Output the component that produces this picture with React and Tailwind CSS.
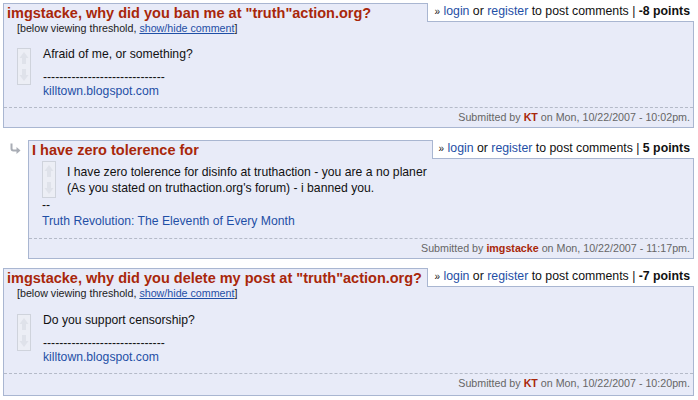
import React from 'react';

const RED = 'text-[#a8270a]';
const BLUE = 'text-[#1f4fa6]';

function VoteBox() {
  return (
    <div className="w-[14px] h-[37px] shrink-0 border border-[#cfd3dc] bg-[#eceef5]">
      <svg width="12" height="35" viewBox="0 0 12 35">
        <path d="M6 3 L1.5 9 L4 9 L4 15 L8 15 L8 9 L10.5 9 Z" fill="#dfe2ea" />
        <path d="M6 32 L1.5 26 L4 26 L4 20 L8 20 L8 26 L10.5 26 Z" fill="#dfe2ea" />
      </svg>
    </div>
  );
}

function ReplyArrow() {
  return (
    <svg width="12" height="12" viewBox="0 0 12 12">
      <path d="M2.5 0.5 L2.5 5.5 Q2.5 7.5 4.5 7.5 L8 7.5" fill="none" stroke="#a9adb5" strokeWidth="2" />
      <path d="M7.5 4 L11.5 7.5 L7.5 11 Z" fill="#a9adb5" />
    </svg>
  );
}

function Links({ points }) {
  return (
    <div className="absolute top-[-1px] right-[-1px] h-[19px] bg-white border-l border-b border-[#a9b6d1] pl-[6px] pr-[4px] text-[12.3px] leading-[16px] text-[#111] whitespace-nowrap">
      <span className="text-[10px]">»</span>{' '}
      <a className={BLUE}>login</a> or <a className={BLUE}>register</a> to post comments |{' '}
      <b>{points}</b>
    </div>
  );
}

function Footer({ author, date, bottom = 'pb-[3px]' }) {
  return (
    <div className={`mt-[9px] border-t border-dashed border-[#b4bac8] pt-[3px] pr-[3px] text-right text-[10.7px] leading-[13px] text-[#666] ${bottom}`}>
      Submitted by <b className={RED}>{author}</b> on {date}.
    </div>
  );
}

function Comment({ title, points, threshold, author, date, bottom, children }) {
  return (
    <div className="relative flex-1 border border-[#a9b6d1] bg-[#e8ebf8]">
      <Links points={points} />
      <div className={`pl-[3px] text-[14.5px] leading-[18px] font-bold ${RED}`}>{title}</div>
      {threshold && (
        <div className="pl-[13px] text-[10.7px] leading-[13px] text-[#222]">
          [below viewing threshold, <a className="text-[#1f4fa6] underline">show/hide comment</a>]
        </div>
      )}
      {children}
      <Footer author={author} date={date} bottom={bottom} />
    </div>
  );
}

export default function App() {
  return (
    <div className="w-[698px] h-[400px] bg-white pt-[3px] pl-[3px] pr-[4px] font-['Liberation_Sans',Arial,sans-serif] text-[#111]">
      <div className="flex">
        <Comment
          title={'imgstacke, why did you ban me at "truth"action.org?'}
          points="-8 points"
          threshold
          author="KT"
          date="Mon, 10/22/2007 - 10:02pm"
        >
          <div className="flex items-start mt-[12px] pl-[13px]">
            <div className="mt-px">
              <VoteBox />
            </div>
            <div className="ml-[12px] text-[12.2px] leading-[14px]">
              <p className="mb-[9px]">Afraid of me, or something?</p>
              <p>
                ------------------------------
                <br />
                <a className={BLUE}>killtown.blogspot.com</a>
              </p>
            </div>
          </div>
        </Comment>
      </div>

      <div className="flex mt-[12px]">
        <div className="w-[25px] shrink-0 pl-[6px] pt-[3px]">
          <ReplyArrow />
        </div>
        <Comment title="I have zero tolerence for" points="5 points" author="imgstacke" date="Mon, 10/22/2007 - 11:17pm">
          <div className="mt-[2px] pl-[13px] text-[12.2px] leading-[16px]">
            <div className="flex items-start">
              <VoteBox />
              <p className="ml-[11px] mt-[3px]">
                I have zero tolerence for disinfo at truthaction - you are a no planer
                <br />
                (As you stated on truthaction.org's forum) - i banned you.
              </p>
            </div>
            <p className="-mt-px">
              --
              <br />
              <a className={BLUE}>Truth Revolution: The Eleventh of Every Month</a>
            </p>
          </div>
        </Comment>
      </div>

      <div className="flex mt-[9px]">
        <Comment
          title={'imgstacke, why did you delete my post at "truth"action.org?'}
          points="-7 points"
          threshold
          author="KT"
          date="Mon, 10/22/2007 - 10:20pm"
          bottom="pb-[5px]"
        >
          <div className="flex items-start mt-[13px] pl-[13px]">
            <div className="mt-px">
              <VoteBox />
            </div>
            <div className="ml-[12px] text-[12.2px] leading-[14px]">
              <p className="mb-[9px]">Do you support censorship?</p>
              <p>
                ------------------------------
                <br />
                <a className={BLUE}>killtown.blogspot.com</a>
              </p>
            </div>
          </div>
        </Comment>
      </div>
    </div>
  );
}
